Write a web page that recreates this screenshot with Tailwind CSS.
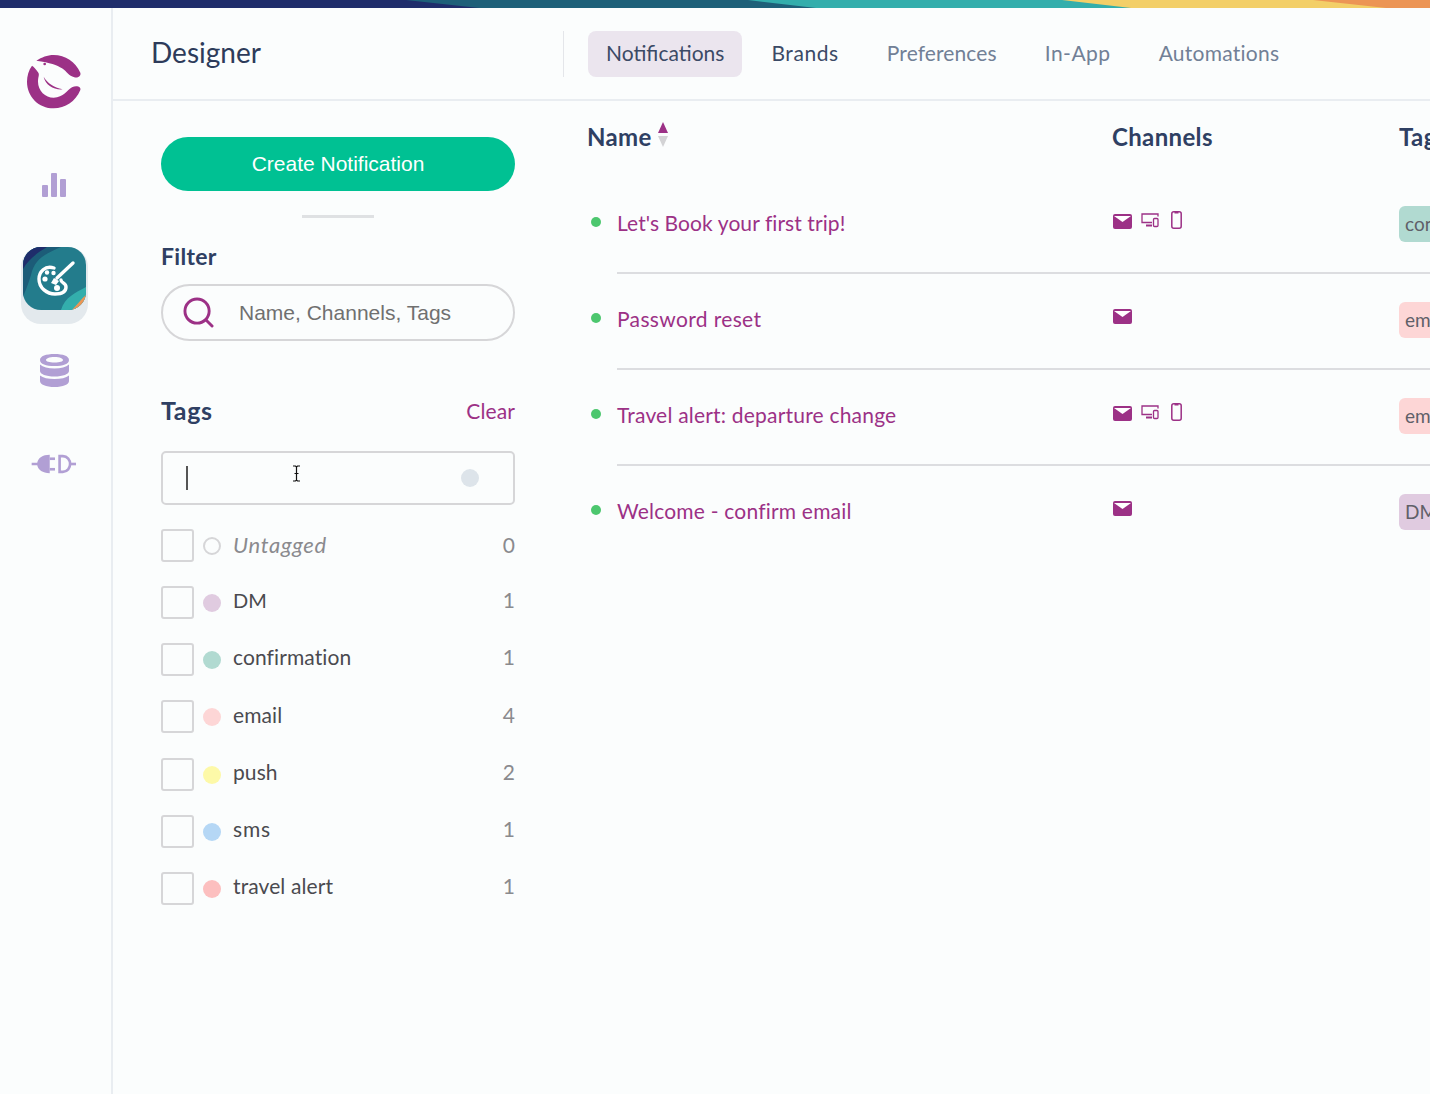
<!DOCTYPE html>
<html lang="en">
  <head>
    <meta charset="UTF-8" />
    <title>Designer</title>
    <script src="https://cdn.jsdelivr.net/npm/@tailwindcss/browser@4"></script>
  </head>
  <body class="w-[1430px] h-[1094px] overflow-hidden bg-[#fbfdfd] font-['Lato',sans-serif]">
    <!-- Top stripe -->
    <svg class="block" width="1430" height="8" viewBox="0 0 1430 8">
      <rect width="1430" height="8" fill="#1f2d6b" />
      <polygon points="406,0 1430,0 1430,8 479,8" fill="#1e6079" />
      <polygon points="748,0 1430,0 1430,8 816,8" fill="#33aeac" />
      <polygon points="1062,0 1430,0 1430,8 1131,8" fill="#f3cf68" />
      <polygon points="1313,0 1430,0 1430,8 1386,8" fill="#ec9555" />
    </svg>

    <div class="flex h-[1086px]">
      <!-- Sidebar -->
      <nav class="w-[113px] shrink-0 border-r-2 border-[#e9edf1] flex flex-col items-center pt-[46px]">
        <svg class="block w-[55px] h-[56px] mr-[2px]" viewBox="80 162 165 168">
          <path fill="#9c3186" d="M108 182 C125 172 140 165 160 165 C195 165 225 185 240 218 C243 228 232 235 222 232 C205 228 200 215 185 205 C170 195 150 188 108 182 Z" />
          <path fill="#9c3186" d="M95 197 C85 210 80 228 80 245 C80 290 115 325 160 325 C195 325 225 305 240 270 C243 260 228 255 215 262 C200 270 190 293 160 293 C135 293 113 272 113 245 C113 230 118 225 114 218 C108 208 100 200 95 197 Z" />
          <path fill="#9c3186" d="M130 230 C142 250 160 262 187 268 C160 270 135 255 130 230 Z" />
          <circle fill="#9c3186" cx="133" cy="192" r="4" />
        </svg>

        <svg class="block mt-[63px] mr-[4px]" width="24" height="25" viewBox="0 0 24 25" fill="#b19fd4">
          <rect x="0" y="12" width="6" height="12" rx="1" />
          <rect x="9" y="0" width="6" height="24" rx="1" />
          <rect x="18" y="6" width="6" height="18" rx="1" />
        </svg>

        <div class="relative mt-[49px] mr-[2px] w-[67px] h-[77px] rounded-[20px] bg-[#e3e9ed]">
          <svg class="absolute left-[2px] top-0 rounded-[18px]" width="63" height="63" viewBox="0 0 63 63">
            <rect width="63" height="63" fill="#237c8c" />
            <path d="M0 0 H38 C25 6 12 10 8 28 C5 38 2 45 0 50 Z" fill="#1c5c78" />
            <path d="M0 0 H24 C14 6 6 12 0 22 Z" fill="#1f2d6b" />
            <path d="M38 63 C42 50 52 46 63 40 V63 Z" fill="#33aeac" />
            <path d="M49 63 C54 58 58 52 63 48 V63 Z" fill="#ec9555" />
            <g fill="none" stroke="#fff" stroke-width="3.4" stroke-linecap="round" stroke-linejoin="round">
              <path d="M31 21 C22 18 16 25 16 32 C16 41 24 47 32 47 C38 47 43 45 43 40 C43 36 38 36 38 33" />
              <path d="M50 16 L34 31" />
            </g>
            <g fill="#fff">
              <circle cx="22" cy="32" r="2.6" />
              <circle cx="24" cy="25.5" r="2.2" />
              <circle cx="30.5" cy="26" r="2.2" />
              <circle cx="34" cy="41" r="3" />
              <path d="M31 31 L36 34 L33 38 L28 36 Z" />
            </g>
          </svg>
        </div>

        <svg class="block mt-[30px] mr-[2px]" width="29" height="33" viewBox="0 0 29 33" fill="#b19fd4">
          <path fill-rule="evenodd" d="M14.5 0 C23 0 29 2 29 6 C29 10 23 12 14.5 12 C6 12 0 10 0 6 C0 2 6 0 14.5 0 Z M14.5 3 C9 3 6 4.5 6 6 C6 7.5 9 8.5 14.5 8.5 C20 8.5 23 7.5 23 6 C23 4.5 20 3 14.5 3 Z" />
          <path d="M0 10.5 C3 13 8 14.5 14.5 14.5 C21 14.5 26 13 29 10.5 V17 C29 20 23 22.5 14.5 22.5 C6 22.5 0 20 0 17 Z" />
          <path d="M0 21.5 C3 24 8 25 14.5 25 C21 25 26 24 29 21.5 V27 C29 30.5 23 33 14.5 33 C6 33 0 30.5 0 27 Z" />
        </svg>

        <svg class="block mt-[67px] mr-[4px]" width="46" height="20" viewBox="93 670 140 60" fill="#b19fd4">
          <path d="M95 696 H112 C115 682 128 672 150 672 V728 C128 728 115 718 112 704 H95 Z" />
          <rect x="150" y="680" width="16" height="8" />
          <rect x="150" y="712" width="16" height="8" />
          <path d="M180 676 H190 C204 676 212 688 212 700 C212 712 204 724 190 724 H180 Z" fill="none" stroke="#b19fd4" stroke-width="8" />
          <rect x="212" y="696" width="18" height="8" />
        </svg>
      </nav>

      <div class="flex-1 min-w-0">
        <!-- Header -->
        <header class="flex items-center h-[93px] border-b-2 border-[#e9edf1]">
          <h1 class="w-[450px] pl-[38px] pb-[4px] text-[28px] font-normal text-[#2d3b5a]">Designer</h1>
          <div class="w-px h-[46px] bg-[#e4e6ea]"></div>
          <div class="flex items-center ml-[24px] text-[21px] text-[#718096]">
            <a class="h-[46px] px-[18px] pb-[2px] flex items-center rounded-lg bg-[#ebe5ee] text-[#3b4a66]">Notifications</a>
            <a class="ml-[29px] pb-[2px] tracking-[0.6px] text-[#3b4a66]">Brands</a>
            <a class="ml-[48px] pb-[2px] tracking-[0.1px]">Preferences</a>
            <a class="ml-[48px] pb-[2px] tracking-[0.5px]">In-App</a>
            <a class="ml-[48px] pb-[2px] tracking-[0.25px]">Automations</a>
          </div>
        </header>

        <div class="flex">
          <!-- Filter column -->
          <aside class="w-[354px] ml-[48px] shrink-0 pt-[36px]">
            <button class="w-full h-[54px] rounded-full bg-[#00c193] text-white text-[21px] font-['Liberation_Sans',sans-serif]">Create Notification</button>
            <div class="w-[72px] h-[3px] bg-[#dfe1e3] mx-auto mt-[24px]"></div>

            <h2 class="mt-[23px] text-[23px] tracking-[0.3px] leading-[30px] font-bold text-[#2f4063]">Filter</h2>
            <div class="mt-[13px] h-[57px] rounded-full border-2 border-[#d6d6d8] flex items-center pl-[20px]">
              <svg width="31" height="31" viewBox="0 0 32 32" fill="none" stroke="#9c3186" stroke-width="3" stroke-linecap="round">
                <circle cx="14.5" cy="14.5" r="12.5" />
                <path d="M24 24 L30 30" />
              </svg>
              <span class="ml-[25px] text-[21px] text-[#707070] font-['Liberation_Sans',sans-serif]">Name, Channels, Tags</span>
            </div>

            <div class="mt-[55px] flex justify-between items-center h-[30px]">
              <h2 class="text-[25px] tracking-[0.6px] font-bold text-[#2f4063]">Tags</h2>
              <a class="text-[21px] tracking-[0.1px] text-[#9c3186]">Clear</a>
            </div>
            <div class="relative mt-[25px] h-[54px] rounded-[5px] border-2 border-[#d6d6d8] flex items-center">
              <div class="ml-[23px] w-[2px] h-[24px] bg-[#555]"></div>
              <div class="ml-auto mr-[34px] w-[18px] h-[18px] rounded-full bg-[#dde4ea]"></div>
              <!-- mouse cursor -->
              <svg class="absolute left-[129px] top-[12px]" width="9" height="17" viewBox="0 0 9 17" fill="none" stroke="#111" stroke-width="1.2">
                <path d="M1 1 H3.5 L4.5 2 L5.5 1 H8 M4.5 2 V15 M1 16 H3.5 L4.5 15 L5.5 16 H8 M2.5 8.5 H6.5" />
              </svg>
            </div>

            <ul class="mt-[24px] text-[21px] tracking-[0.1px] text-[#4a4a4f]">
              <li class="flex items-center h-[33px] mb-[24px]">
                <span class="w-[33px] h-[33px] rounded-[3px] border-2 border-[#d6d6d8]"></span>
                <span class="ml-[9px] w-[18px] h-[18px] rounded-full border-2 border-[#d6d6d8]"></span>
                <span class="ml-[12px] mb-[2px] italic text-[22px] tracking-[0.7px] text-[#8a8a8e]">Untagged</span>
                <span class="ml-auto mb-[2px] text-[#8a8a8e]">0</span>
              </li>
              <li class="flex items-center h-[33px] mb-[24px]">
                <span class="w-[33px] h-[33px] rounded-[3px] border-2 border-[#d6d6d8]"></span>
                <span class="ml-[9px] w-[18px] h-[18px] rounded-full bg-[#e0cbe0]"></span>
                <span class="ml-[12px] mb-[5px] text-[20px]">DM</span>
                <span class="ml-auto mb-[5px] text-[#8a8a8e]">1</span>
              </li>
              <li class="flex items-center h-[33px] mb-[24px]">
                <span class="w-[33px] h-[33px] rounded-[3px] border-2 border-[#d6d6d8]"></span>
                <span class="ml-[9px] w-[18px] h-[18px] rounded-full bg-[#b1dad1]"></span>
                <span class="ml-[12px] mb-[5px]">confirmation</span>
                <span class="ml-auto mb-[5px] text-[#8a8a8e]">1</span>
              </li>
              <li class="flex items-center h-[33px] mb-[25px]">
                <span class="w-[33px] h-[33px] rounded-[3px] border-2 border-[#d6d6d8]"></span>
                <span class="ml-[9px] w-[18px] h-[18px] rounded-full bg-[#fdd6d6]"></span>
                <span class="ml-[12px] mb-[4px]">email</span>
                <span class="ml-auto mb-[4px] text-[#8a8a8e]">4</span>
              </li>
              <li class="flex items-center h-[33px] mb-[24px]">
                <span class="w-[33px] h-[33px] rounded-[3px] border-2 border-[#d6d6d8]"></span>
                <span class="ml-[9px] w-[18px] h-[18px] rounded-full bg-[#fdf9a8]"></span>
                <span class="ml-[12px] mb-[5px]">push</span>
                <span class="ml-auto mb-[5px] text-[#8a8a8e]">2</span>
              </li>
              <li class="flex items-center h-[33px] mb-[24px]">
                <span class="w-[33px] h-[33px] rounded-[3px] border-2 border-[#d6d6d8]"></span>
                <span class="ml-[9px] w-[18px] h-[18px] rounded-full bg-[#b5d7f5]"></span>
                <span class="ml-[12px] mb-[5px] tracking-[0.8px]">sms</span>
                <span class="ml-auto mb-[5px] text-[#8a8a8e]">1</span>
              </li>
              <li class="flex items-center h-[33px]">
                <span class="w-[33px] h-[33px] rounded-[3px] border-2 border-[#d6d6d8]"></span>
                <span class="ml-[9px] w-[18px] h-[18px] rounded-full bg-[#fcbfbf]"></span>
                <span class="ml-[12px] mb-[5px]">travel alert</span>
                <span class="ml-auto mb-[5px] text-[#8a8a8e]">1</span>
              </li>
            </ul>
          </aside>

          <!-- Notifications table -->
          <main class="ml-[72px] flex-1 min-w-0 overflow-hidden">
            <div class="grid grid-cols-[525px_287px_100px] h-[76px] pt-[21px] text-[24px] tracking-[0.35px] font-bold text-[#2f4063] leading-[30px]">
              <div class="flex items-center h-[30px]">
                Name
                <svg class="ml-[6px] mb-[4px]" width="10" height="26" viewBox="0 0 10 26">
                  <path d="M5 0 L10 11 H0 Z" fill="#9c3186" />
                  <path d="M0 14 H10 L5 25 Z" fill="#d3d3d5" />
                </svg>
              </div>
              <div>Channels</div>
              <div>Tags</div>
            </div>

            <div class="grid grid-cols-[525px_287px_100px] h-[96px] pt-[32px] relative">
              <div class="flex items-start">
                <span class="ml-[4px] mt-[8px] w-[10px] h-[10px] rounded-full bg-[#4cc76e]"></span>
                <span class="ml-[16px] -mt-px text-[21px] tracking-[0.08px] leading-[30px] text-[#9c3186]">Let's Book your first trip!</span>
              </div>
              <div class="flex items-start gap-[9px] pt-[3px] pl-px">
                <svg width="19" height="15" viewBox="0 0 19 15" class="mt-[2px]"><rect width="19" height="15" rx="2" fill="#9c3186" /><path d="M1 2 L9.5 8 L18 2" fill="#fff" /></svg>
                <svg width="18" height="15" viewBox="0 0 18 15" class="mt-[1px]" fill="none" stroke="#9c3186" stroke-width="1.3"><path d="M11 9.5 H1 V1 H17 V3.5" /><path d="M5 12.5 H11" stroke-width="2" /><rect x="12.5" y="5.5" width="4.5" height="8" rx="1" /></svg>
                <svg width="11" height="18" viewBox="0 0 11 18" class="ml-[3px] mt-[-1px]" fill="none" stroke="#9c3186" stroke-width="1.5"><rect x="0.8" y="0.8" width="9.4" height="16.4" rx="2" /><path d="M3.5 1.5 H7.5" stroke-width="2" /></svg>
              </div>
              <div class="h-[36px] -mt-[3px] pl-[6px] rounded-md bg-[#b1dad1] text-[19px] leading-[36px] text-[#5f6068]">confirmation</div>
              <div class="absolute left-[30px] right-0 -bottom-px h-[2px] bg-[#dcdde0]"></div>
            </div>

            <div class="grid grid-cols-[525px_287px_100px] h-[96px] pt-[32px] relative">
              <div class="flex items-start">
                <span class="ml-[4px] mt-[8px] w-[10px] h-[10px] rounded-full bg-[#4cc76e]"></span>
                <span class="ml-[16px] -mt-px text-[21px] tracking-[0.35px] leading-[30px] text-[#9c3186]">Password reset</span>
              </div>
              <div class="flex items-start gap-[9px] pt-[3px] pl-px">
                <svg width="19" height="15" viewBox="0 0 19 15" class="mt-[1px]"><rect width="19" height="15" rx="2" fill="#9c3186" /><path d="M1 2 L9.5 8 L18 2" fill="#fff" /></svg>
              </div>
              <div class="h-[36px] -mt-[3px] pl-[6px] rounded-md bg-[#fdd6d6] text-[19px] leading-[36px] text-[#5f6068]">email</div>
              <div class="absolute left-[30px] right-0 -bottom-px h-[2px] bg-[#dcdde0]"></div>
            </div>

            <div class="grid grid-cols-[525px_287px_100px] h-[96px] pt-[32px] relative">
              <div class="flex items-start">
                <span class="ml-[4px] mt-[8px] w-[10px] h-[10px] rounded-full bg-[#4cc76e]"></span>
                <span class="ml-[16px] -mt-px text-[21px] tracking-[0.2px] leading-[30px] text-[#9c3186]">Travel alert: departure change</span>
              </div>
              <div class="flex items-start gap-[9px] pt-[3px] pl-px">
                <svg width="19" height="15" viewBox="0 0 19 15" class="mt-[2px]"><rect width="19" height="15" rx="2" fill="#9c3186" /><path d="M1 2 L9.5 8 L18 2" fill="#fff" /></svg>
                <svg width="18" height="15" viewBox="0 0 18 15" class="mt-[1px]" fill="none" stroke="#9c3186" stroke-width="1.3"><path d="M11 9.5 H1 V1 H17 V3.5" /><path d="M5 12.5 H11" stroke-width="2" /><rect x="12.5" y="5.5" width="4.5" height="8" rx="1" /></svg>
                <svg width="11" height="18" viewBox="0 0 11 18" class="ml-[3px] mt-[-1px]" fill="none" stroke="#9c3186" stroke-width="1.5"><rect x="0.8" y="0.8" width="9.4" height="16.4" rx="2" /><path d="M3.5 1.5 H7.5" stroke-width="2" /></svg>
              </div>
              <div class="h-[36px] -mt-[3px] pl-[6px] rounded-md bg-[#fdd6d6] text-[19px] leading-[36px] text-[#5f6068]">email</div>
              <div class="absolute left-[30px] right-0 -bottom-px h-[2px] bg-[#dcdde0]"></div>
            </div>

            <div class="grid grid-cols-[525px_287px_100px] h-[96px] pt-[32px]">
              <div class="flex items-start">
                <span class="ml-[4px] mt-[8px] w-[10px] h-[10px] rounded-full bg-[#4cc76e]"></span>
                <span class="ml-[16px] -mt-px text-[21px] tracking-[0.2px] leading-[30px] text-[#9c3186]">Welcome - confirm email</span>
              </div>
              <div class="flex items-start gap-[9px] pt-[3px] pl-px">
                <svg width="19" height="15" viewBox="0 0 19 15" class="mt-[1px]"><rect width="19" height="15" rx="2" fill="#9c3186" /><path d="M1 2 L9.5 8 L18 2" fill="#fff" /></svg>
              </div>
              <div class="h-[36px] -mt-[3px] pl-[6px] rounded-md bg-[#e0cbe0] text-[19px] leading-[36px] text-[#5f6068]">DM</div>
            </div>
          </main>
        </div>
      </div>
    </div>
  </body>
</html>
